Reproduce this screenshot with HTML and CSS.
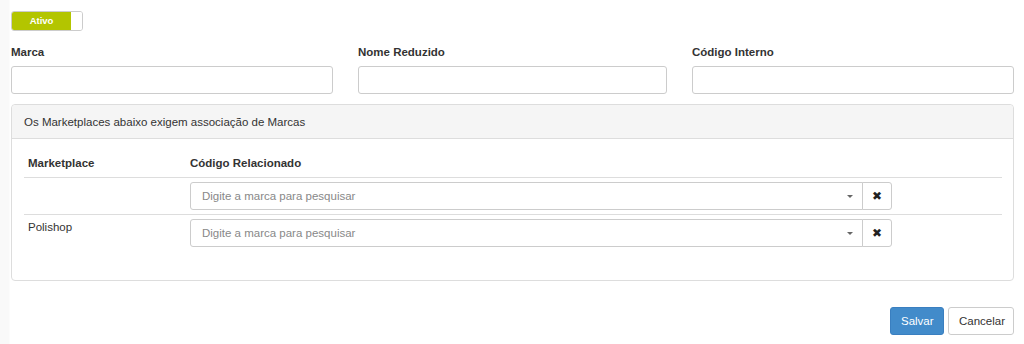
FILE: index.html
```html
<!DOCTYPE html>
<html lang="pt-BR">
<head>
    <meta charset="UTF-8">
    <meta name="viewport" content="width=device-width, initial-scale=1.0">
    <title>Marca</title>
    <link rel="stylesheet" href="styles.css">
</head>
<body>
    <div class="page">
        <div class="switch">
            <span class="switch-on">Ativo</span>
            <span class="switch-knob"></span>
        </div>

        <div class="form-row">
            <div class="form-group">
                <label>Marca</label>
                <input type="text" class="form-control">
            </div>
            <div class="form-group">
                <label>Nome Reduzido</label>
                <input type="text" class="form-control">
            </div>
            <div class="form-group">
                <label>Código Interno</label>
                <input type="text" class="form-control">
            </div>
        </div>

        <div class="panel">
            <div class="panel-heading">Os Marketplaces abaixo exigem associação de Marcas</div>
            <div class="panel-body">
                <table class="table">
                    <thead>
                        <tr>
                            <th class="col-mkt">Marketplace</th>
                            <th>Código Relacionado</th>
                        </tr>
                    </thead>
                    <tbody>
                        <tr>
                            <td></td>
                            <td>
                                <div class="input-group">
                                    <div class="select">
                                        <span class="placeholder">Digite a marca para pesquisar</span>
                                        <span class="caret"></span>
                                    </div>
                                    <button class="btn-clear">&#x2716;</button>
                                </div>
                            </td>
                        </tr>
                        <tr>
                            <td>Polishop</td>
                            <td>
                                <div class="input-group">
                                    <div class="select">
                                        <span class="placeholder">Digite a marca para pesquisar</span>
                                        <span class="caret"></span>
                                    </div>
                                    <button class="btn-clear">&#x2716;</button>
                                </div>
                            </td>
                        </tr>
                    </tbody>
                </table>
            </div>
        </div>

        <div class="actions">
            <button class="btn btn-primary">Salvar</button>
            <button class="btn btn-default">Cancelar</button>
        </div>
    </div>
</body>
</html>
```

FILE: styles.css
```css
body {
    font-family: 'Liberation Sans', Arial, Helvetica, sans-serif;
    font-size: 11.5px;
    color: #333;
    margin: 0;
    padding: 0;
    background: linear-gradient(to right, #f9f9f9 0, #f9f9f9 9px, #fff 10px);
}
.page {
    padding: 11px 10px 0 11px;
    height: 333px;
}
.switch {
    display: flex;
    width: 70px;
    height: 18px;
    border: 1px solid #ccc;
    border-radius: 3px;
    overflow: hidden;
}
.switch-on {
    width: 59px;
    background-color: #b3c500;
    color: #fff;
    font-size: 9.5px;
    font-weight: bold;
    line-height: 18px;
    text-align: center;
}
.switch-knob {
    flex: 1;
    background-color: #fff;
}
.form-row {
    display: grid;
    grid-template-columns: 322px 309px 322px;
    column-gap: 25px;
    margin-top: 13px;
}
.form-group label {
    display: block;
    font-weight: bold;
    line-height: 17px;
    margin-bottom: 5px;
}
.form-control {
    display: block;
    box-sizing: border-box;
    width: 100%;
    height: 28px;
    margin: 0;
    border: 1px solid #ccc;
    border-radius: 3px;
    background: #fff;
}
.panel {
    margin-top: 10px;
    border: 1px solid #ddd;
    border-radius: 4px;
    height: 177px;
    box-sizing: border-box;
}
.panel-heading {
    background-color: #f5f5f5;
    border-bottom: 1px solid #ddd;
    padding: 9px 12px 7px;
    line-height: 17px;
    border-radius: 4px 4px 0 0;
}
.panel-body {
    padding: 8px 11px 0 12px;
}
.table {
    width: 100%;
    border-collapse: collapse;
}
.table th {
    text-align: left;
    font-weight: bold;
    padding: 8px 4px 5px;
    line-height: 17px;
    border-bottom: 1px solid #ddd;
}
.table td {
    padding: 4px 4px 4px;
    line-height: 17px;
    vertical-align: top;
    border-top: 1px solid #ddd;
}
.col-mkt {
    width: 154px;
}
.input-group {
    display: flex;
    width: 702px;
}
.select {
    flex: 1;
    display: flex;
    align-items: center;
    justify-content: space-between;
    height: 28px;
    box-sizing: border-box;
    border: 1px solid #ccc;
    border-radius: 3px 0 0 3px;
    padding: 0 9px 0 11px;
}
.placeholder {
    color: #888;
}
.caret {
    width: 0;
    height: 0;
    border-left: 3px solid transparent;
    border-right: 3px solid transparent;
    border-top: 3px solid #666;
}
.btn-clear {
    width: 30px;
    height: 28px;
    margin-left: -1px;
    border: 1px solid #ccc;
    border-radius: 0 3px 3px 0;
    background: #fff;
    color: #222;
    font-size: 12px;
    padding: 0;
    font-family: 'DejaVu Sans', sans-serif;
}
.actions {
    display: flex;
    justify-content: flex-end;
    gap: 4px;
    margin-top: 26px;
}
.btn {
    height: 28px;
    font-family: 'Liberation Sans', Arial, sans-serif;
    font-size: 11.5px;
    border-radius: 3px;
    padding: 0 10px;
    border: 1px solid transparent;
}
.btn-primary {
    width: 54px;
    background-color: #428bca;
    border-color: #3a7fc0;
    color: #fff;
}
.btn-default {
    width: 66px;
    background-color: #fff;
    border-color: #ccc;
    color: #333;
}
```
